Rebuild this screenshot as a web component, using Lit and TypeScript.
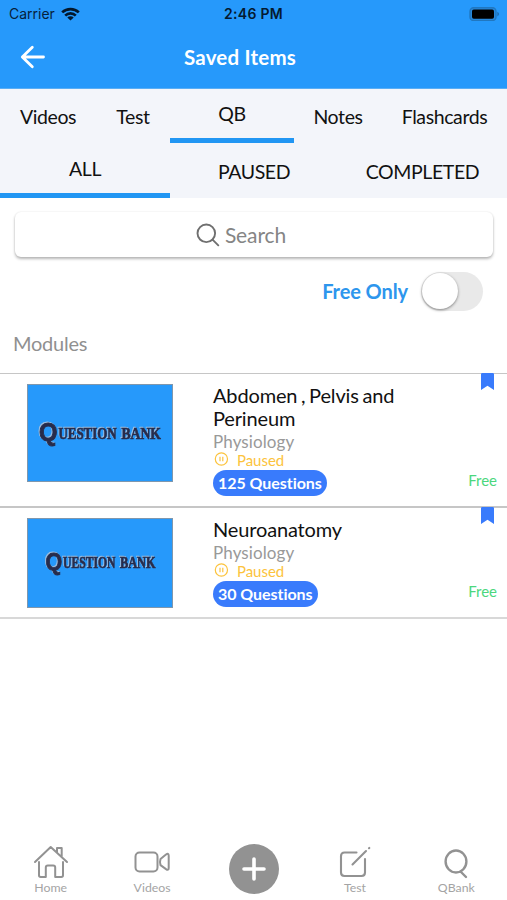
import { LitElement, html, css } from "lit";
import { customElement, property } from "lit/decorators.js";
import { classMap } from "lit/directives/class-map.js";

@customElement("status-header")
class StatusHeader extends LitElement {
  static styles = css`
    :host { display: block; height: 89px; box-sizing: border-box; background: #2699fb; border-bottom: 1px solid #5aaef5; }
    .status { display: grid; grid-template-columns: 1fr auto 1fr; align-items: center; height: 28px; padding: 0 9px 0 9px; font: 14px/28px Inter, sans-serif; color: #06213c; }
    .left { display: flex; align-items: center; gap: 6px; }
    .left svg { margin-top: -1px; }
    .time { font-weight: 600; font-size: 14px; letter-spacing: 0.3px; color: #041a30; }
    .right { display: flex; justify-content: flex-end; }
    .right svg { margin: -1px -2px 0 0; }
    .bar { display: flex; align-items: center; height: 58px; padding: 0 211px 0 20px; justify-content: space-between; }
    h1 { margin: 0; color: #fff; font: 700 20.5px/58px Lato, sans-serif; letter-spacing: 0.2px; white-space: nowrap; }
    svg { display: block; }
  `;
  render() {
    return html`
      <div class="status">
        <div class="left"><span>Carrier</span>
          <svg width="19" height="14" viewBox="0 0 19 14" fill="none" stroke="#03182d" stroke-width="2.7">
            <path d="M1.2 5.4a12 12 0 0 1 16.6 0"/><path d="M4.2 8.6a7.6 7.6 0 0 1 10.6 0"/><path d="M9.5 13.6 6.3 10.5a4.5 4.5 0 0 1 6.4 0z" fill="#03182d" stroke="none"/>
          </svg></div>
        <span class="time">2:46 PM</span>
        <div class="right">
          <svg width="32" height="14" viewBox="0 0 32 14"><rect x="2" y=".8" width="26" height="12.8" rx="3.6" fill="#2688dc" stroke="#2077c0" stroke-width="1.4"/><rect x="4" y="2.5" width="22" height="9.3" rx="1.8" fill="#000"/><path d="M29.3 4.8c2.4 1.2 2.4 3.4 0 4.6z" fill="#1d6db4"/></svg>
        </div>
      </div>
      <div class="bar">
        <svg width="26" height="24" viewBox="0 0 26 24" fill="none" stroke="#fff" stroke-width="2.8" stroke-linecap="round" stroke-linejoin="round"><path d="M12.3 2.3 2.3 12l10 9.7M2.5 12h21"/></svg>
        <h1>Saved Items</h1>
      </div>`;
  }
}

@customElement("tab-row")
class TabRow extends LitElement {
  @property({ type: Array }) tabs: string[] = [];
  @property() active = "";
  @property() kind = "";
  static styles = css`
    :host { display: block; background: #f3f5fa; }
    .row { display: grid; height: 54px; }
    .main { grid-template-columns: 96px 74px 124px 88px 125px; }
    .sub { grid-template-columns: 170px 168px 169px; height: 55px; }
    .tab { box-sizing: border-box; text-align: center; font: 19.5px/55px Lato, sans-serif; color: #111; letter-spacing: -0.4px; }
    .on { border-bottom: 5px solid #2196f3; line-height: 50px; height: 54px; }
    .sub .tab { line-height: 57px; }
    .sub .on { line-height: 52px; height: 55px; }
  `;
  render() {
    return html`<div class=${classMap({ row: true, main: this.kind === "main", sub: this.kind === "sub" })}>
      ${this.tabs.map((t) => html`<div class=${classMap({ tab: true, on: t === this.active })}>${t}</div>`)}
    </div>`;
  }
}

@customElement("module-card")
class ModuleCard extends LitElement {
  @property() name = "";
  @property() subject = "";
  @property({ type: Number }) count = 0;
  @property({ type: Boolean }) tall = false;
  static styles = css`
    :host { display: block; font-family: Lato, sans-serif; }
    .card { display: grid; grid-template-columns: 213px 200px 1fr; box-sizing: border-box; height: 111px; border-top: 2px solid #c6c6c6; position: relative; }
    .tall { height: 133px; border-top-width: 1px; }
    .thumb { box-sizing: border-box; margin: 10px 0 0 27px; width: 146px; height: 90px; border: 1px solid #7f97ad; background: #2699fb; display: flex; align-items: center; justify-content: center; }
    .tall .thumb { height: 98px; }
    .thumb svg { width: 113px; height: 28px; overflow: visible; filter: drop-shadow(-0.8px -0.3px 0.2px #9dbddd); }
    .tall .thumb svg { width: 124px; height: 31px; }
    .q { font: 700 26px "Liberation Sans", sans-serif; stroke-width: 0.9px; }
    .w { font: 700 17.5px "Liberation Serif", serif; stroke-width: 0.7px; }
    .logo { fill: #272c4c; stroke: #272c4c; }
    .info { padding-top: 10px; }
    .name { font-size: 20px; line-height: 23px; color: #111; letter-spacing: -0.15px; word-spacing: -1.3px; }
    .subject { font-size: 17px; line-height: 22px; padding-top: 1px; color: #999; letter-spacing: 0.1px; }
    .state { display: flex; align-items: center; gap: 8px; height: 17px; margin-top: -2px; font-size: 15px; color: #fcc33c; letter-spacing: -0.05px; }
    .pill { display: block; width: fit-content; height: 26px; margin-top: 2px; box-sizing: border-box; padding: 0 5px; border-radius: 13px; background: #397bfc; color: #fff; font-weight: 700; font-size: 16px; line-height: 25px; white-space: nowrap; font-variant-ligatures: none; letter-spacing: -0.05px; }
    .side { display: flex; flex-direction: column; justify-content: flex-end; align-items: flex-end; padding: 0 10px 16px 0; font-size: 15px; line-height: 20px; color: #4bd77d; }
    .mark { position: absolute; right: 13px; top: -1px; display: block; }
  `;
  render() {
    return html`<div class=${classMap({ card: true, tall: this.tall })}>
      <div class="thumb"><svg class="logo" viewBox="0 0 124 31">
        <text class="q" x="1" y="23" textLength="18.5" lengthAdjust="spacingAndGlyphs">Q</text>
        <text class="w" x="20.5" y="21.3" textLength="58" lengthAdjust="spacingAndGlyphs">UESTION</text>
        <text class="w" x="83.5" y="21.3" textLength="39.5" lengthAdjust="spacingAndGlyphs">BANK</text></svg></div>
      <div class="info">
        <div class="name">${this.name}</div>
        <div class="subject">${this.subject}</div>
        <div class="state"><svg width="16" height="15" viewBox="0 0 16 15" fill="none" stroke="#fcc33c" stroke-width="1.2"><circle cx="8.4" cy="7" r="6.1"/><path d="M7 4.8v4.4M9.8 4.8v4.4"/></svg><span>Paused</span></div>
        <span class="pill">${this.count} Questions</span>
      </div>
      <div class="side">Free</div>
      <svg class="mark" width="13" height="18" viewBox="0 0 13 18"><path d="M1.3 0h10.4Q13 0 13 1.3V17L6.5 12.8 0 17V1.3Q0 0 1.3 0z" fill="#397bfc"/></svg>
    </div>`;
  }
}

@customElement("bottom-nav")
class BottomNav extends LitElement {
  static styles = css`
    :host { display: block; }
    nav { display: grid; grid-template-columns: repeat(5, 1fr); height: 57px; }
    .item { display: flex; flex-direction: column; align-items: center; gap: 1px; font: 12.3px/14px Lato, sans-serif; color: #a4a4a4; }
    svg { display: block; fill: none; stroke: #929292; stroke-width: 2; stroke-linejoin: round; stroke-linecap: round; }
    .fab { width: 50px; height: 50px; margin: 1px 0 0 1px; border-radius: 50%; background: #929292; display: flex; align-items: center; justify-content: center; }
    .fab svg { stroke: #fff; stroke-width: 3.6; }
  `;
  render() {
    return html`<nav>
      <div class="item"><svg width="36" height="37" viewBox="0 0 36 37"><path d="M6 19v13.3q0 1.7 1.7 1.7h5.1v-9.5q0-2 2-2h5.4q2 0 2 2V34h6.1q1.7 0 1.7-1.7V19M2 19 17.7 4 34 19M24 9.5V5h4.7v9"/></svg>Home</div>
      <div class="item"><svg width="36" height="37" viewBox="0 0 36 37"><rect x="1.5" y="9.5" width="22" height="19" rx="4"/><path d="M26.5 16 32 11.5q2.7-1.8 2.7 1.2v12.2q0 3-2.7 1.2l-5.5-4q-1-3 0-6.1z"/></svg>Videos</div>
      <div class="item"><div class="fab"><svg width="26" height="26" viewBox="0 0 26 26"><path d="M13 3v20M3 13h20"/></svg></div></div>
      <div class="item"><svg width="36" height="37" viewBox="0 0 36 37"><path d="M19.5 9.5H7.5q-3.5 0-3.5 3.5v16.5Q4 33 7.5 33h17q3.5 0 3.5-3.5V16M15.5 21.5l13.5-13.5M32 5.2l.3-.3" stroke-width="2.1"/></svg>Test</div>
      <div class="item"><svg width="36" height="37" viewBox="0 0 36 37"><ellipse cx="18" cy="18.5" rx="10.4" ry="11" stroke-width="2.4"/><path d="m22.5 28.5 5.5 5.5" stroke-width="2.4"/></svg>QBank</div>
    </nav>`;
  }
}

@customElement("app-root")
class AppRoot extends LitElement {
  static styles = css`
    :host { display: flex; flex-direction: column; height: 900px; background: #fff; font-family: Lato, sans-serif; overflow: hidden; }
    .search { display: flex; align-items: center; justify-content: center; gap: 5px; margin: 14px 14px 0 15px; padding-right: 26px; height: 45px; border-radius: 6px; box-shadow: 0 2px 3px rgba(0, 0, 0, 0.28), 0 0 2px rgba(0, 0, 0, 0.1); font-size: 21px; letter-spacing: -0.1px; color: #858585; }
    .search svg { display: block; fill: none; stroke: #6f6f6f; stroke-width: 1.9; stroke-linecap: round; }
    .filter { display: flex; justify-content: flex-end; align-items: center; gap: 13px; height: 40px; margin-top: 14px; padding-right: 24px; font-size: 20px; font-weight: 700; letter-spacing: -0.1px; color: #2d96ed; }
    .switch { width: 62px; height: 39px; border-radius: 20px; background: #e9e9e9; display: flex; align-items: center; }
    .knob { width: 36px; height: 36px; border-radius: 50%; background: #fff; margin-left: 1px; box-shadow: 0 1px 3px rgba(0, 0, 0, 0.45); }
    .label { height: 62px; line-height: 65px; padding-left: 13px; font-size: 20px; letter-spacing: -0.25px; color: #909090; }
    .end { border-top: 2px solid #d8d8d8; flex: 1; }
  `;
  render() {
    return html`
      <status-header></status-header>
      <tab-row kind="main" active="QB" .tabs=${["Videos", "Test", "QB", "Notes", "Flashcards"]}></tab-row>
      <tab-row kind="sub" active="ALL" .tabs=${["ALL", "PAUSED", "COMPLETED"]}></tab-row>
      <div class="search"><svg width="24" height="24" viewBox="0 0 24 24"><circle cx="10.3" cy="10.3" r="8.8"/><path d="m16.8 16.8 5.5 5.5"/></svg><span>Search</span></div>
      <div class="filter"><span>Free Only</span><div class="switch"><div class="knob"></div></div></div>
      <div class="label">Modules</div>
      <module-card tall name="Abdomen , Pelvis and Perineum" subject="Physiology" .count=${125}></module-card>
      <module-card name="Neuroanatomy" subject="Physiology" .count=${30}></module-card>
      <div class="end"></div>
      <bottom-nav></bottom-nav>`;
  }
}
